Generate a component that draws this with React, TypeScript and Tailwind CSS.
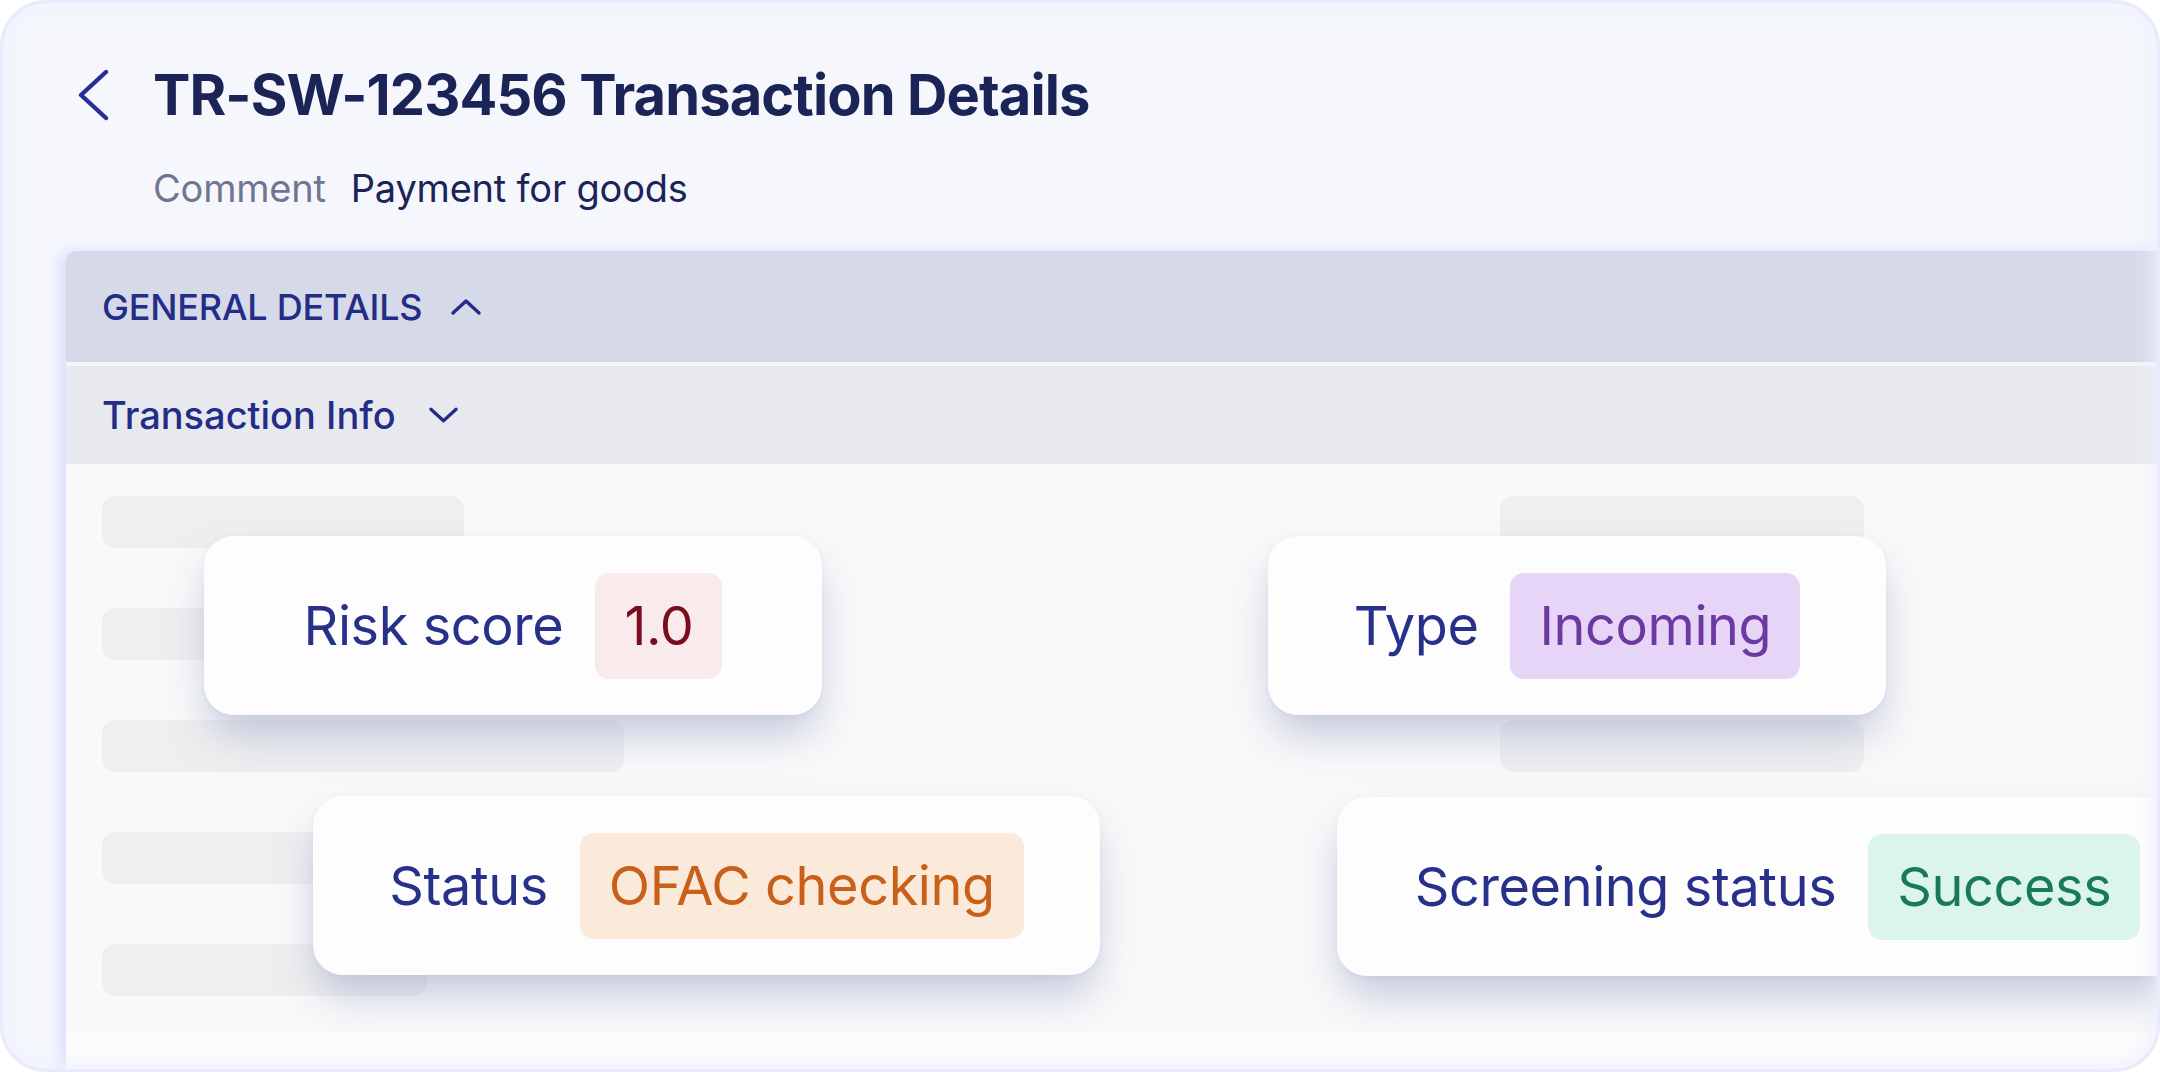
import React from "react";

const Chevron = ({ dir, className }: { dir: "up" | "down"; className?: string }) => (
  <svg viewBox="0 0 32 18" className={className} fill="none" stroke="currentColor" strokeWidth={3.4} strokeLinecap="round" strokeLinejoin="round">
    {dir === "up" ? <polyline points="3,15 16,3 29,15" /> : <polyline points="3,3 16,15 29,3" />}
  </svg>
);

const Badge = ({ text, className }: { text: string; className: string }) => (
  <span className={`flex h-[106px] items-center rounded-[14px] px-[29px] text-[54px] tracking-[-0.4px] ${className}`}>{text}</span>
);

const FloatCard = ({
  label,
  badge,
  badgeClass,
  className,
}: {
  label: string;
  badge: string;
  badgeClass: string;
  className: string;
}) => (
  <div
    className={`absolute flex h-[179px] items-center justify-center gap-[32px] rounded-[30px] bg-[#fdfdfe] shadow-[0_24px_42px_-6px_rgba(140,152,190,0.5),0_2px_6px_rgba(180,188,210,0.15)] ${className}`}
  >
    <span className="text-[54px] tracking-[-0.4px] text-[#28318a]">{label}</span>
    <Badge text={badge} className={badgeClass} />
  </div>
);

const Bar = ({ w }: { w: string }) => <div className={`h-[52px] rounded-[14px] bg-[#efeff0] ${w}`} />;

export default function App() {
  return (
    <div className="h-[1072px] w-[2160px] bg-white" style={{ fontFamily: "Inter, 'Noto Sans', sans-serif" }}>
      <div className="relative flex h-full w-full flex-col overflow-hidden rounded-[46px] bg-[#f5f7fd]">
        {/* header */}
        <div className="mt-[60px] flex h-[70px] items-center pl-[78px]">
          <svg viewBox="0 0 32 52" className="h-[52px] w-[32px] text-[#262f96]" fill="none" stroke="currentColor" strokeWidth={4.4} strokeLinecap="round" strokeLinejoin="round">
            <polyline points="28,3 3,26 28,49" />
          </svg>
          <h1 className="ml-[43px] text-[56px] font-bold tracking-[-0.9px] text-[#1b2456]">TR-SW-123456 Transaction Details</h1>
        </div>
        <div className="mt-[38px] flex h-[40px] items-center gap-[25px] pl-[153px] text-[38px] tracking-[-0.2px]">
          <span className="text-[#70768f]">Comment</span>
          <span className="text-[#1b2456]">Payment for goods</span>
        </div>

        {/* panel */}
        <div className="ml-[66px] mt-[43px] flex flex-1 flex-col overflow-hidden rounded-tl-[10px] shadow-[-6px_0_14px_rgba(215,220,250,0.9)]">
          <div className="flex h-[111px] shrink-0 items-center gap-[28px] bg-[#d6d9e8] px-[36px] text-[#232d87]">
            <span className="text-[36px] font-medium tracking-[-0.2px]">GENERAL DETAILS</span>
            <Chevron dir="up" className="h-[18px] w-[32px]" />
          </div>
          <div className="h-[4px] shrink-0 bg-[#f4f5fa]" />
          <div className="flex h-[98px] shrink-0 items-center gap-[32px] bg-[#e8e9ef] px-[36px] text-[#232d87]">
            <span className="text-[38px] font-medium">Transaction Info</span>
            <Chevron dir="down" className="h-[18px] w-[31px]" />
          </div>

          <div className="relative flex h-[568px] shrink-0 bg-[#f9f9fa] px-[36px] pt-[32px]">
            <div className="flex w-[1398px] flex-col gap-[60px]">
              <Bar w="w-[362px]" />
              <Bar w="w-[362px]" />
              <Bar w="w-[522px]" />
              <Bar w="w-[440px]" />
              <Bar w="w-[325px]" />
            </div>
            <div className="flex w-[364px] flex-col gap-[60px]">
              <Bar w="w-[364px]" />
              <Bar w="w-[364px]" />
              <Bar w="w-[364px]" />
            </div>

            <FloatCard label="Risk score" badge="1.0" badgeClass="bg-[#f9eaeb] text-[#7a0c1f]" className="left-[138px] top-[72px] w-[618px]" />
            <FloatCard label="Type" badge="Incoming" badgeClass="bg-[#e6d5f7] text-[#6c39a3]" className="left-[1202px] top-[72px] w-[618px]" />
            <FloatCard label="Status" badge="OFAC checking" badgeClass="bg-[#fbeada] text-[#c8601a]" className="left-[247px] top-[332px] w-[787px]" />
            <FloatCard label="Screening status" badge="Success" badgeClass="bg-[#dbf5eb] text-[#187a5b]" className="left-[1271px] top-[333px] w-[881px]" />
          </div>
          <div className="flex-1 bg-[#fcfcfd]" />
        </div>

        {/* soft frame edge */}
        <div className="pointer-events-none absolute inset-0 z-10 rounded-[46px] shadow-[inset_0_0_0_3px_#e9ebfd,inset_0_0_20px_6px_#eef0fd]" />
      </div>
    </div>
  );
}
